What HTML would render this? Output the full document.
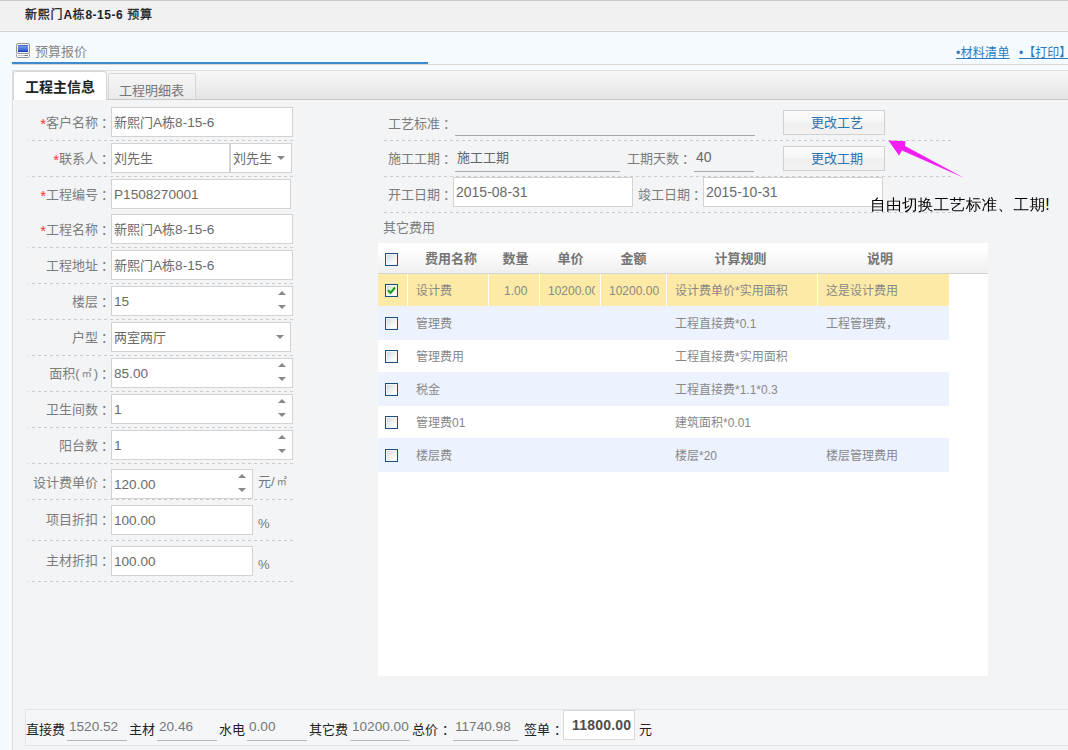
<!DOCTYPE html>
<html lang="zh-CN">
<head>
<meta charset="utf-8">
<title>新熙门A栋8-15-6 预算</title>
<style>
*{box-sizing:border-box;margin:0;padding:0}
html,body{width:1068px;height:750px;overflow:hidden}
body{position:relative;background:#f5fafe;font-family:"Liberation Sans","Noto Sans CJK SC",sans-serif;font-size:13px;color:#777}
.abs{position:absolute}
.t{position:absolute;white-space:nowrap;line-height:1}
#topbar{left:0;top:0;width:1068px;height:32px;background:#f1f1f1;border-top:1px solid #c9c9c9;border-bottom:1px solid #d4d4d4}
#title{left:25px;top:9px;font-size:12px;color:#222;letter-spacing:.8px;-webkit-text-stroke:.3px #222}
#title b{-webkit-text-stroke:0;letter-spacing:.5px}
#panel{left:12px;top:100px;width:1060px;height:660px;background:#f3f4f6;border-left:1px solid #ddd}
#tabbar{left:12px;top:70px;width:1060px;height:30px;border-top:1px solid #dedede;border-bottom:1px solid #c8c8c8;border-left:1px solid #ddd;background:linear-gradient(#f8f8f8,#e4e4e4)}
.tab{position:absolute;border:1px solid #d0d0d0;border-bottom:none;border-radius:3px 3px 0 0;text-align:center;white-space:nowrap}
#tab1{left:13px;top:71px;width:94px;height:29px;background:#fff;font-weight:bold;font-size:14px;color:#222;line-height:30px;border-color:#d6d6d6}
#tab2{left:108px;top:73px;width:88px;height:26px;border-radius:2px 2px 0 0;border-color:#d6d6d6;background:linear-gradient(#f6f6f6,#e9e9e9);font-size:13px;color:#777;line-height:34px;text-indent:-1px}
.lbl{position:absolute;white-space:nowrap;text-align:right;color:#7c7c7c;font-size:13px;line-height:16px}
.lbl i{font-style:normal;color:#f33;font-size:15px;line-height:10px;position:relative;top:2px}
.lbl b{font-weight:normal;margin-left:3px}
.n{font-size:13.6px}
.lbl u,u.m2{text-decoration:none;font-size:10px;margin:0 2px;position:relative;top:-1px}
.inp{position:absolute;background:#fff;border:1px solid #d2d2d2;height:30px;color:#6a6a6a;font-size:13px;line-height:29px;padding-left:2px;white-space:nowrap;overflow:hidden}
.dash{position:absolute;height:1px;background:linear-gradient(90deg,#cdcdcd 50%,transparent 50%) 4px 0/6px 1px repeat-x}
.dash.r{background-position:1px 0}
.uline{position:absolute;height:1px;background:#a9a9a9}
.spin:before,.spin:after,.caret:after{content:"";position:absolute;border:4px solid transparent}
.spin:before{right:6px;top:4px;border-bottom:4px solid #888;border-top:none}
.spin:after{right:6px;top:18px;border-top:4px solid #888;border-bottom:none}
.caret:after{right:6px;top:12px;border-top:4px solid #888;border-bottom:none}
.btn{position:absolute;width:102px;height:25px;border:1px solid #d0d0d0;background:linear-gradient(#fbfbfb 0,#f6f6f6 48%,#efefef 52%,#f2f2f2 100%);color:#2b74b0;font-size:13px;text-align:center;line-height:24px;padding-left:6px}
.gh{position:absolute;top:251px;font-weight:bold;font-size:13px;color:#757575;line-height:16px;white-space:nowrap}
.gc{position:absolute;font-size:12px;color:#888;line-height:12px;white-space:nowrap}
.cb{position:absolute;width:13px;height:13px;border:1px solid #1c4f85;background:linear-gradient(135deg,#d4d4d0,#fff 80%);box-shadow:inset 0 0 0 1px #f4f4f4}
.cb svg{position:absolute;left:0;top:0}
</style>
</head>
<body>
<div id="topbar" class="abs"></div>
<div id="title" class="t">新熙门<b>A</b>栋<b>8-15-6</b> 预算</div>

<!-- heading -->
<svg class="abs" style="left:16px;top:43px" width="14" height="15" viewBox="0 0 14 15">
<defs><linearGradient id="scr" x1="0" y1="0" x2="0" y2="1"><stop offset="0" stop-color="#3159cc"/><stop offset=".2" stop-color="#7193ea"/><stop offset=".75" stop-color="#3d62d8"/><stop offset="1" stop-color="#0d31a8"/></linearGradient></defs>
<rect x="0.5" y="0.5" width="13" height="10" rx="1.6" fill="#f1f1f1" stroke="#969696"/>
<rect x="2" y="2" width="10" height="7" fill="url(#scr)"/>
<rect x="0.5" y="10.5" width="13" height="4" rx="1.2" fill="#fbfbfb" stroke="#969696"/>
<rect x="2.2" y="12" width="9.6" height="1" fill="#c4c4c4"/>
<rect x="8.6" y="12" width="3" height="1" fill="#6a6a6a"/>
</svg>
<div class="t" style="left:35px;top:45px;font-size:13px;color:#888">预算报价</div>
<div class="abs" style="left:12px;top:64px;width:1056px;height:1px;background:#d6d6d6"></div>
<div class="abs" style="left:12px;top:62px;width:416px;height:2px;background:#3b8bce"></div>
<div class="t" style="left:956px;top:47px;font-size:12px;color:#2a7ac0;text-decoration:underline;letter-spacing:.3px">•材料清单</div>
<div class="t" style="left:1019px;top:47px;font-size:12px;color:#2a7ac0;text-decoration:underline">•【打印】</div>

<!-- tabs -->
<div id="tabbar" class="abs"></div>
<div id="panel" class="abs"></div>
<div id="tab1" class="tab">工程主信息</div>
<div id="tab2" class="tab">工程明细表</div>

<!--LEFT-->
<div class="lbl" style="left:20px;width:94px;top:115px"><i>*</i>客户名称<b>：</b></div>
<div class="inp" style="left:111px;top:107px;width:182px">新熙门<span class="n">A</span>栋<span class="n">8-15-6</span></div>
<div class="dash" style="left:28px;top:140px;width:265px"></div>
<div class="lbl" style="left:20px;width:94px;top:151px"><i>*</i>联系人<b>：</b></div>
<div class="inp" style="left:111px;top:143px;width:119px">刘先生</div>
<div class="inp caret" style="left:230px;top:143px;width:62px">刘先生</div>
<div class="dash" style="left:28px;top:176px;width:265px"></div>
<div class="lbl" style="left:20px;width:94px;top:187px"><i>*</i>工程编号<b>：</b></div>
<div class="inp" style="left:111px;top:179px;width:180px"><span class="n">P1508270001</span></div>
<div class="lbl" style="left:20px;width:94px;top:222px"><i>*</i>工程名称<b>：</b></div>
<div class="inp" style="left:111px;top:214px;width:182px">新熙门<span class="n">A</span>栋<span class="n">8-15-6</span></div>
<div class="dash" style="left:28px;top:247px;width:265px"></div>
<div class="lbl" style="left:20px;width:94px;top:258px">工程地址<b>：</b></div>
<div class="inp" style="left:111px;top:250px;width:182px">新熙门<span class="n">A</span>栋<span class="n">8-15-6</span></div>
<div class="dash" style="left:28px;top:283px;width:265px"></div>
<div class="lbl" style="left:20px;width:94px;top:294px">楼层<b>：</b></div>
<div class="inp spin" style="left:111px;top:286px;width:182px"><span class="n">15</span></div>
<div class="dash" style="left:28px;top:319px;width:265px"></div>
<div class="lbl" style="left:20px;width:94px;top:330px">户型<b>：</b></div>
<div class="inp caret" style="left:111px;top:322px;width:180px">两室两厅</div>
<div class="dash" style="left:28px;top:355px;width:265px"></div>
<div class="lbl" style="left:20px;width:94px;top:366px">面积(<u>㎡</u>)<b>：</b></div>
<div class="inp spin" style="left:111px;top:358px;width:182px"><span class="n">85.00</span></div>
<div class="dash" style="left:28px;top:391px;width:265px"></div>
<div class="lbl" style="left:20px;width:94px;top:402px">卫生间数<b>：</b></div>
<div class="inp spin" style="left:111px;top:394px;width:182px"><span class="n">1</span></div>
<div class="dash" style="left:28px;top:427px;width:265px"></div>
<div class="lbl" style="left:20px;width:94px;top:438px">阳台数<b>：</b></div>
<div class="inp spin" style="left:111px;top:430px;width:182px"><span class="n">1</span></div>
<div class="dash" style="left:28px;top:463px;width:265px"></div>
<div class="lbl" style="left:20px;width:94px;top:475px">设计费单价<b>：</b></div>
<div class="inp spin" style="left:111px;top:469px;width:142px"><span class="n">120.00</span></div>
<div class="dash" style="left:28px;top:499px;width:265px"></div>
<div class="lbl" style="left:20px;width:94px;top:512px">项目折扣<b>：</b></div>
<div class="inp" style="left:111px;top:505px;width:142px"><span class="n">100.00</span></div>
<div class="dash" style="left:28px;top:540px;width:265px"></div>
<div class="lbl" style="left:20px;width:94px;top:553px">主材折扣<b>：</b></div>
<div class="inp" style="left:111px;top:546px;width:142px"><span class="n">100.00</span></div>
<div class="dash" style="left:28px;top:581px;width:265px"></div>
<div class="t" style="left:258px;top:476px;font-size:13px;color:#777;margin-top:-1px">元/<u class="m2">㎡</u></div>
<div class="t" style="left:258px;top:517px;font-size:13px;color:#777">%</div>
<div class="t" style="left:258px;top:558px;font-size:13px;color:#777">%</div>
<!--/LEFT-->
<!--RIGHT-->
<div class="lbl" style="left:388px;top:116px;text-align:left">工艺标准<b>：</b></div>
<div class="uline" style="left:455px;top:135px;width:300px"></div>
<div class="btn" style="left:783px;top:110px">更改工艺</div>
<div class="dash r" style="left:383px;top:140px;width:570px"></div>
<div class="lbl" style="left:388px;top:151px;text-align:left">施工工期<b>：</b></div>
<div class="t" style="left:457px;top:151px;color:#666">施工工期</div>
<div class="uline" style="left:455px;top:171px;width:165px"></div>
<div class="lbl" style="left:627px;top:151px;text-align:left">工期天数<b>：</b></div>
<div class="t" style="left:696px;top:150px;font-size:14px;color:#666">40</div>
<div class="uline" style="left:694px;top:171px;width:60px"></div>
<div class="btn" style="left:783px;top:146px">更改工期</div>
<div class="dash r" style="left:383px;top:176px;width:570px"></div>
<div class="lbl" style="left:388px;top:187px;text-align:left">开工日期<b>：</b></div>
<div class="inp" style="left:453px;top:177px;width:180px;font-size:14px;line-height:28px">2015-08-31</div>
<div class="lbl" style="left:638px;top:187px;text-align:left">竣工日期<b>：</b></div>
<div class="inp" style="left:703px;top:177px;width:180px;font-size:14px;line-height:28px">2015-10-31</div>
<div class="dash r" style="left:383px;top:212px;width:570px"></div>
<div class="lbl" style="left:383px;top:220px;text-align:left">其它费用</div>
<svg class="abs" style="left:880px;top:135px" width="95" height="50" viewBox="880 135 95 50"><polygon points="888.4,140.6 905.5,141.2 905,146 964.3,178 902,150.5 899,155.5" fill="#f31df3"/></svg>
<div class="t" style="left:870px;top:197px;font-family:'Liberation Sans','WenQuanYi Zen Hei',sans-serif;font-size:15.65px;letter-spacing:.3px;color:#000">自由切换工艺标准、工期!</div>
<!--/RIGHT-->
<!--GRID-->
<div class="abs" style="left:378px;top:243px;width:610px;height:433px;background:#fff"></div>
<div class="abs" style="left:378px;top:243px;width:610px;height:31px;background:linear-gradient(#fff 20%,#efefef);border-bottom:1px solid #d4d4d4"></div>
<div class="gh" style="left:425px">费用名称</div>
<div class="gh" style="left:502.5px">数量</div>
<div class="gh" style="left:557.5px">单价</div>
<div class="gh" style="left:620.5px">金额</div>
<div class="gh" style="left:714.5px">计算规则</div>
<div class="gh" style="left:867px">说明</div>
<div class="cb" style="left:385px;top:253px"></div>
<div class="abs" style="left:378px;top:274px;width:571px;height:32px;background:#fdeaa6"></div>
<div class="abs" style="left:407px;top:274px;width:1px;height:32px;background:#fff"></div>
<div class="abs" style="left:488px;top:274px;width:1px;height:32px;background:#fff"></div>
<div class="abs" style="left:539px;top:274px;width:1px;height:32px;background:#fff"></div>
<div class="abs" style="left:600px;top:274px;width:1px;height:32px;background:#fff"></div>
<div class="abs" style="left:666px;top:274px;width:1px;height:32px;background:#fff"></div>
<div class="abs" style="left:817px;top:274px;width:1px;height:32px;background:#fff"></div>
<div class="cb ck" style="left:385px;top:284px"><svg width="11" height="11" viewBox="0 0 11 11"><path d="M2 5.2 L4.5 8 L9 2.5" fill="none" stroke="#1a9a1a" stroke-width="2"/></svg></div>
<div class="gc" style="left:416px;top:285px">设计费</div>
<div class="gc" style="left:504px;top:285px">1.00</div>
<div class="gc" style="left:548px;top:285px;width:46.5px;overflow:hidden">10200.00</div>
<div class="gc" style="left:609px;top:285px">10200.00</div>
<div class="gc" style="left:675px;top:285px">设计费单价*实用面积</div>
<div class="gc" style="left:826px;top:285px">这是设计费用</div>
<div class="abs" style="left:378px;top:306px;width:571px;height:34px;background:#edf3fe"></div>
<div class="cb" style="left:385px;top:317px"></div>
<div class="gc" style="left:416px;top:318px">管理费</div>
<div class="gc" style="left:675px;top:318px">工程直接费*0.1</div>
<div class="gc" style="left:826px;top:318px">工程管理费，</div>
<div class="cb" style="left:385px;top:350px"></div>
<div class="gc" style="left:416px;top:351px">管理费用</div>
<div class="gc" style="left:675px;top:351px">工程直接费*实用面积</div>
<div class="abs" style="left:378px;top:372px;width:571px;height:34px;background:#edf3fe"></div>
<div class="cb" style="left:385px;top:383px"></div>
<div class="gc" style="left:416px;top:384px">税金</div>
<div class="gc" style="left:675px;top:384px">工程直接费*1.1*0.3</div>
<div class="cb" style="left:385px;top:416px"></div>
<div class="gc" style="left:416px;top:417px">管理费01</div>
<div class="gc" style="left:675px;top:417px">建筑面积*0.01</div>
<div class="abs" style="left:378px;top:438px;width:571px;height:34px;background:#edf3fe"></div>
<div class="cb" style="left:385px;top:449px"></div>
<div class="gc" style="left:416px;top:450px">楼层费</div>
<div class="gc" style="left:675px;top:450px">楼层*20</div>
<div class="gc" style="left:826px;top:450px">楼层管理费用</div>
<!--/GRID-->
<!--FOOT-->
<div class="abs" style="left:25px;top:709px;width:1050px;height:37px;background:#f5f6f8;border:1px solid #e3e4e6"></div>
<div class="t" style="left:26px;top:723px;font-size:13px;color:#222">直接费</div>
<div class="t" style="left:69px;top:720px;font-size:13.6px;color:#777">1520.52</div>
<div class="uline" style="left:67px;top:740px;width:60px;background:#b8b8b8"></div>
<div class="t" style="left:129px;top:723px;font-size:13px;color:#222">主材</div>
<div class="t" style="left:159px;top:720px;font-size:13.6px;color:#777">20.46</div>
<div class="uline" style="left:157px;top:740px;width:60px;background:#b8b8b8"></div>
<div class="t" style="left:219px;top:723px;font-size:13px;color:#222">水电</div>
<div class="t" style="left:249px;top:720px;font-size:13.6px;color:#777">0.00</div>
<div class="uline" style="left:247px;top:740px;width:60px;background:#b8b8b8"></div>
<div class="t" style="left:309px;top:723px;font-size:13px;color:#222">其它费</div>
<div class="t" style="left:352px;top:720px;font-size:13.6px;color:#777">10200.00</div>
<div class="uline" style="left:350px;top:740px;width:60px;background:#b8b8b8"></div>
<div class="t" style="left:412px;top:723px;font-size:13px;color:#222">总价<b style="font-weight:normal;margin-left:4px">：</b></div>
<div class="t" style="left:455px;top:720px;font-size:13.6px;color:#777">11740.98</div>
<div class="uline" style="left:453px;top:740px;width:65px;background:#b8b8b8"></div>
<div class="t" style="left:524px;top:723px;font-size:13px;color:#222">签单<b style="font-weight:normal;margin-left:4px">：</b></div>
<div class="inp" style="left:563px;top:710px;width:72px;height:30px;font-weight:bold;font-size:14px;color:#4c4c4c;padding-left:8px;line-height:28px;letter-spacing:.2px;border-color:#d9d9d9">11800.00</div>
<div class="t" style="left:639px;top:723px;font-size:13px;color:#222">元</div>
<!--/FOOT-->
</body>
</html>
